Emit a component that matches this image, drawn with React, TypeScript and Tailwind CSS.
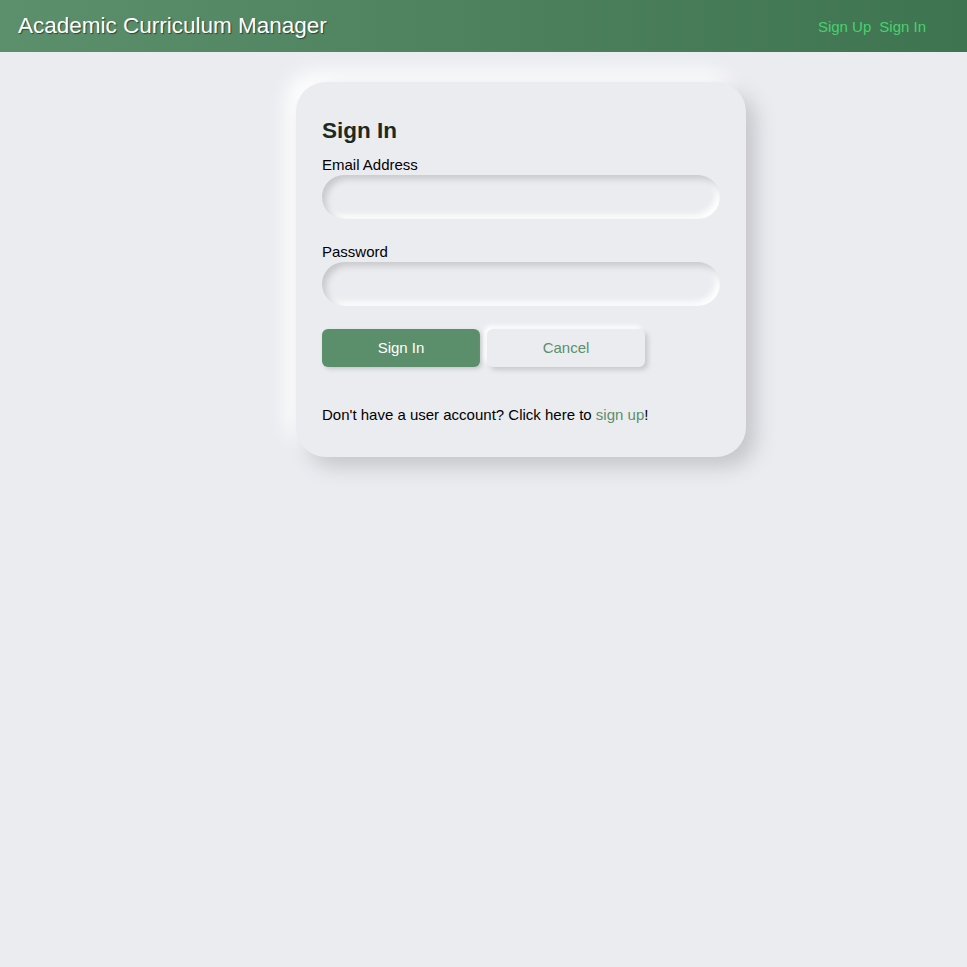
const Field = ({ label, type }: { label: string; type: string }) => (
  <div className="flex flex-col">
    <label className="text-[15px] leading-[18px] text-black">{label}</label>
    <input
      type={type}
      className="mt-[1px] h-[44px] w-full rounded-[22px] bg-[#ebecf0] px-5 outline-none shadow-[inset_4px_4px_6px_#c8c9cc,inset_-4px_-4px_6px_#ffffff]"
    />
  </div>
)

export default function App() {
  return (
    <div className="min-h-[967px] bg-[#ebecf0] font-['Liberation_Sans',Arial,sans-serif]">
      <header className="flex h-[52px] items-center justify-between bg-gradient-to-r from-[#5c8f6b] to-[#3f7450] pl-[18px] pr-[41px]">
        <h1 className="text-[22.5px] text-white [text-shadow:1px_1px_1px_rgba(0,0,0,0.5)]">
          Academic Curriculum Manager
        </h1>
        <nav className="mt-[2px] flex gap-[8px] text-[15px] text-[#45d26f]">
          <a href="#">Sign Up</a>
          <a href="#">Sign In</a>
        </nav>
      </header>

      <div className="ml-[296px] mt-[30px] w-[450px] rounded-[30px] bg-[#ebecf0] px-[26px] pb-[33px] pt-[36px] shadow-[10px_10px_20px_#c5c6ca,-10px_-10px_20px_#ffffff]">
        <h2 className="text-[22.5px] font-bold leading-[26px] text-[#1b2a22]">Sign In</h2>
        <div className="mt-[12px]">
          <Field label="Email Address" type="email" />
        </div>
        <div className="mt-[24px]">
          <Field label="Password" type="password" />
        </div>
        <div className="mt-[23px] flex gap-[7px]">
          <button className="h-[38px] w-[158px] rounded-[6px] bg-[#5b8f6b] text-[15px] text-white shadow-[2px_2px_4px_#c5c6ca]">
            Sign In
          </button>
          <button className="h-[38px] w-[158px] rounded-[6px] bg-[#ebecf0] text-[15px] text-[#5b8f6b] shadow-[3px_3px_5px_#c8c9cc,-3px_-3px_5px_#ffffff]">
            Cancel
          </button>
        </div>
        <p className="mt-[39px] text-[15px] leading-[18px] text-black">
          Don't have a user account? Click here to{' '}
          <a href="#" className="text-[#5b8f6b]">
            sign up
          </a>
          !
        </p>
      </div>
    </div>
  )
}
